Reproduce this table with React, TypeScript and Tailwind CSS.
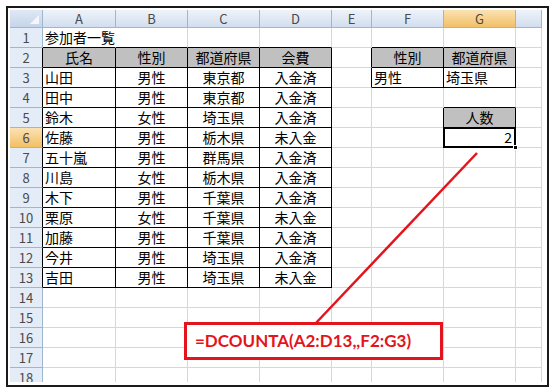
import React from 'react';

const colWidths = ['w-[73px]', 'w-[72px]', 'w-[72px]', 'w-[72px]', 'w-[40px]', 'w-[72px]', 'w-[72px]', 'w-[26px]'];
const colNames = ['A', 'B', 'C', 'D', 'E', 'F', 'G', ''];

const people = [
  ['山田', '男性', '東京都', '入金済'],
  ['田中', '男性', '東京都', '入金済'],
  ['鈴木', '女性', '埼玉県', '入金済'],
  ['佐藤', '男性', '栃木県', '未入金'],
  ['五十嵐', '男性', '群馬県', '入金済'],
  ['川島', '女性', '栃木県', '入金済'],
  ['木下', '男性', '千葉県', '入金済'],
  ['栗原', '女性', '千葉県', '未入金'],
  ['加藤', '男性', '千葉県', '入金済'],
  ['今井', '男性', '埼玉県', '入金済'],
  ['吉田', '男性', '埼玉県', '未入金'],
];

type Cell = { text: string; align: 'left' | 'center' | 'right'; gray?: boolean };

// sheet content keyed by "row,col" (col 0 = A)
const cells: Record<string, Cell> = {
  '1,0': { text: '参加者一覧', align: 'left' },
  '2,0': { text: '氏名', align: 'center', gray: true },
  '2,1': { text: '性別', align: 'center', gray: true },
  '2,2': { text: '都道府県', align: 'center', gray: true },
  '2,3': { text: '会費', align: 'center', gray: true },
  '2,5': { text: '性別', align: 'center', gray: true },
  '2,6': { text: '都道府県', align: 'center', gray: true },
  '3,5': { text: '男性', align: 'left' },
  '3,6': { text: '埼玉県', align: 'left' },
  '5,6': { text: '人数', align: 'center', gray: true },
  '6,6': { text: '2', align: 'right' },
};
people.forEach((p, i) => {
  p.forEach((t, c) => {
    cells[`${i + 3},${c}`] = { text: t, align: c === 0 ? 'left' : 'center' };
  });
});

const boxed = (r: number, c: number) =>
  (r >= 2 && r <= 13 && c >= 0 && c <= 3) ||
  (r >= 2 && r <= 3 && c >= 5 && c <= 6) ||
  (r >= 5 && r <= 6 && c === 6);

const rows = Array.from({ length: 18 }, (_, i) => i + 1);

function ColHeader() {
  return (
    <div className="flex h-[18px]">
      <div className="relative w-[33px] h-full bg-gradient-to-b from-[#dfe8f4] to-[#c6d5ea] border-r border-b border-[#9eb6ce]">
        <div className="absolute right-[3px] bottom-[3px] w-0 h-0 border-l-[9px] border-l-transparent border-b-[9px] border-b-[#f4f7fb]" />
      </div>
      {colNames.map((n, i) => (
        <div
          key={i}
          className={`${colWidths[i]} h-full flex items-center justify-center border-r border-b border-[#9eb6ce] text-[13px] text-[#4a4a4a] ${
            i === 6 ? 'bg-gradient-to-b from-[#fbe2b3] to-[#f2bf63]' : 'bg-gradient-to-b from-[#eef3fa] to-[#d2deee]'
          }`}
        >
          {n}
        </div>
      ))}
    </div>
  );
}

function SheetRow({ r }: { r: number }) {
  return (
    <div className="flex h-[20px]">
      <div
        className={`w-[33px] h-full flex items-center justify-center border-b border-b-[#9eb6ce] border-r text-[13px] text-[#4a4a4a] ${
          r === 6 ? 'bg-gradient-to-b from-[#fbe2b3] to-[#f2bf63]' : 'bg-[#e4ecf7]'
        } ${boxed(r, 0) ? 'border-r-black' : 'border-r-[#9eb6ce]'}`}
      >
        {r}
      </div>
      {colWidths.map((w, c) => {
        const cell = cells[`${r},${c}`];
        const rightBlack = boxed(r, c) || boxed(r, c + 1);
        const bottomBlack = boxed(r, c) || boxed(r + 1, c);
        const overflowRight = r === 1 && c === 0;
        return (
          <div
            key={c}
            className={`relative ${w} h-full flex items-center border-r border-b whitespace-nowrap text-[14px] text-black ${
              rightBlack ? 'border-r-black' : overflowRight ? 'border-r-white' : 'border-r-[#d0d7e5]'
            } ${bottomBlack ? 'border-b-black' : 'border-b-[#d0d7e5]'} ${cell?.gray ? 'bg-[#c0c0c0]' : ''} ${
              cell?.align === 'center' ? 'justify-center' : cell?.align === 'right' ? 'justify-end pr-[3px]' : 'pl-[2px]'
            }`}
          >
            {cell && <span className="relative z-10">{cell.text}</span>}
            {r === 6 && c === 6 && (
              <>
                <div className="absolute -left-px -top-px -right-px -bottom-px border-2 border-black" />
                <div className="absolute -right-[3px] -bottom-[3px] w-[5px] h-[5px] bg-black border border-white z-20" />
              </>
            )}
          </div>
        );
      })}
    </div>
  );
}

export default function App() {
  return (
    <div
      className="relative w-[555px] h-[392px] bg-white pt-[6px] pl-[6px] overflow-hidden"
      style={{ fontFamily: '"Noto Sans CJK JP", "Liberation Sans", sans-serif' }}
    >
      <div className="w-[543px] h-[381px] border-2 border-[#1a1a1a] pt-[2px] pl-[2px]">
        <div className="w-[532px] h-[372px] overflow-hidden">
          <ColHeader />
          {rows.map((r) => (
            <SheetRow key={r} r={r} />
          ))}
        </div>
      </div>

      {/* callout line */}
      <svg className="absolute left-0 top-0" width="555" height="392">
        <line x1="477" y1="153" x2="315" y2="324" stroke="#e3141b" strokeWidth="2.5" />
      </svg>

      {/* callout box */}
      <div className="absolute left-[184px] top-[322px] w-[259px] h-[38px] border-[3px] border-[#e3141b] bg-white flex items-center pl-[8px]">
        <span className="text-[17px] font-bold text-[#e3141b]" style={{ fontFamily: 'Lato, "Open Sans", sans-serif' }}>
          =DCOUNTA(A2:D13,,F2:G3)
        </span>
      </div>
    </div>
  );
}
